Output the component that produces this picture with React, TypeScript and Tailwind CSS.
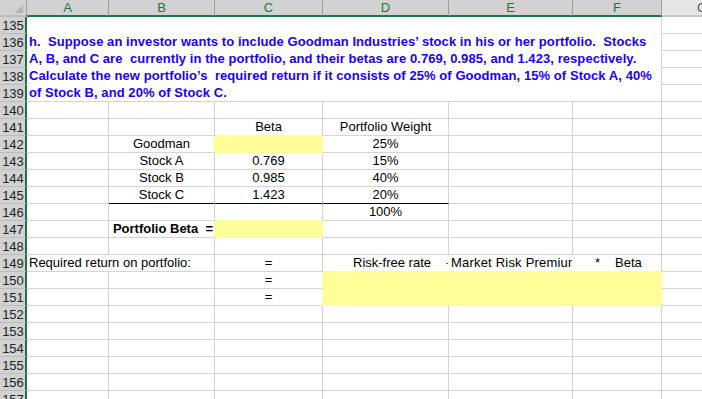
import React from "react";
import { twMerge } from "tailwind-merge";

const YELLOW = "bg-[#ffff99] border-r-[#ffff99] border-b-[#ffff99]";

function Cell({ className, children }: { className?: string; children?: React.ReactNode }) {
  return (
    <div
      className={twMerge(
        "flex items-center min-w-0 whitespace-nowrap border-r border-b border-r-[#d4d4d4] border-b-[#d4d4d4] text-[13px] leading-[16px] text-black",
        className
      )}
    >
      {children}
    </div>
  );
}

function RowHead({ n }: { n: number }) {
  return (
    <div className="flex items-center justify-center pl-[1px] bg-[#d2d2d2] border-r-2 border-r-[#217346] border-b border-b-[#bcbcbc] text-[13px] leading-none text-[#222]">
      {n}
    </div>
  );
}

function ColHead({ label }: { label: string }) {
  return (
    <div className="flex items-center justify-center bg-[#d2d2d2] border-r border-r-[#9e9e9e] border-b-2 border-b-[#217346] text-[13px] leading-none text-[#217346]">
      {label}
    </div>
  );
}

// G column, only a sliver of it is on screen
function GCell() {
  return <Cell />;
}

function Row({ n, children }: { n: number; children?: React.ReactNode }) {
  return (
    <>
      <RowHead n={n} />
      {children}
      <GCell />
    </>
  );
}

function Empty() {
  return <Cell />;
}

export default function App() {
  return (
    <div className="w-[702px] h-[399px] overflow-hidden bg-white font-['Liberation_Sans',Arial,sans-serif]">
      <div className="grid grid-cols-[27px_82px_106px_108px_126px_124px_89px_80px] auto-rows-[17px]">
        {/* column headers */}
        <div className="relative bg-[#d2d2d2] border-r border-r-[#9e9e9e] border-b-2 border-b-[#bcbcbc]">
          <svg className="absolute left-[15px] top-[5px]" width="9" height="8" viewBox="0 0 9 8">
            <polygon points="8,0 8,8 0,8" fill="#b4b4b4" />
          </svg>
        </div>
        {["A", "B", "C", "D", "E", "F"].map((l) => (
          <ColHead key={l} label={l} />
        ))}
        <div className="flex items-center justify-center bg-[#e6e6e6] border-b-2 border-b-[#c8c8c8] text-[13px] leading-none text-[#555]">
          G
        </div>

        {/* 135-139 question text, merged A:F */}
        <RowHead n={135} />
        <div className="col-span-6 row-span-5 flex flex-col border-r border-b border-r-[#d4d4d4] border-b-[#d4d4d4] pl-[2px] text-[13px] leading-[17px] font-bold tracking-[0.07px] text-[#1a00ff] whitespace-pre">
          <div className="h-[17px]" />
          <div>h.  Suppose an investor wants to include Goodman Industries’ stock in his or her portfolio.  Stocks</div>
          <div>A, B, and C are  currently in the portfolio, and their betas are 0.769, 0.985, and 1.423, respectively.</div>
          <div>Calculate the new portfolio’s  required return if it consists of 25% of Goodman, 15% of Stock A, 40%</div>
          <div>of Stock B, and 20% of Stock C.</div>
        </div>
        <GCell />
        <RowHead n={136} />
        <GCell />
        <RowHead n={137} />
        <GCell />
        <RowHead n={138} />
        <GCell />
        <RowHead n={139} />
        <GCell />

        <Row n={140}>
          <Empty /><Empty /><Empty /><Empty /><Empty /><Empty />
        </Row>
        <Row n={141}>
          <Empty />
          <Empty />
          <Cell className="justify-center border-b-[#ffff99]">Beta</Cell>
          <Cell className="justify-center">Portfolio Weight</Cell>
          <Empty />
          <Empty />
        </Row>
        <Row n={142}>
          <Empty />
          <Cell className="justify-center border-r-[#ffff99]">Goodman</Cell>
          <Cell className={YELLOW} />
          <Cell className="justify-center">25%</Cell>
          <Empty />
          <Empty />
        </Row>
        <Row n={143}>
          <Empty />
          <Cell className="justify-center">Stock A</Cell>
          <Cell className="justify-center">0.769</Cell>
          <Cell className="justify-center">15%</Cell>
          <Empty />
          <Empty />
        </Row>
        <Row n={144}>
          <Empty />
          <Cell className="justify-center">Stock B</Cell>
          <Cell className="justify-center">0.985</Cell>
          <Cell className="justify-center">40%</Cell>
          <Empty />
          <Empty />
        </Row>
        <Row n={145}>
          <Empty />
          <Cell className="justify-center border-b-black">Stock C</Cell>
          <Cell className="justify-center border-b-black">1.423</Cell>
          <Cell className="justify-center border-b-black">20%</Cell>
          <Empty />
          <Empty />
        </Row>
        <Row n={146}>
          <Empty />
          <Empty />
          <Cell className="border-b-[#ffff99]" />
          <Cell className="justify-center">100%</Cell>
          <Empty />
          <Empty />
        </Row>
        <Row n={147}>
          <Empty />
          <Cell className="justify-end pr-[1px] font-bold border-r-[#ffff99] whitespace-pre">Portfolio Beta  =</Cell>
          <Cell className={YELLOW} />
          <Empty />
          <Empty />
          <Empty />
        </Row>
        <Row n={148}>
          <Empty /><Empty /><Empty /><Empty /><Empty /><Empty />
        </Row>
        <Row n={149}>
          <Cell className="pl-[2px] border-r-transparent">Required return on portfolio:</Cell>
          <Empty />
          <Cell className="justify-center">=</Cell>
          <Cell className="pl-[30px] border-r-transparent border-b-[#ffff99]">
            <span>Risk-free rate</span>
            <span className="ml-auto w-[2px] h-px bg-[#666]" />
          </Cell>
          <Cell className="pl-[2px] overflow-hidden border-r-transparent border-b-[#ffff99] tracking-[0.2px]">Market Risk Premium</Cell>
          <Cell className="pl-[22px] border-b-[#ffff99]">
            <span>*</span>
            <span className="ml-[15px]">Beta</span>
          </Cell>
        </Row>
        <RowHead n={150} />
        <Empty />
        <Empty />
        <Cell className="justify-center border-r-[#ffff99]">=</Cell>
        <Cell className={twMerge("col-span-3 row-span-2", YELLOW)} />
        <GCell />
        <RowHead n={151} />
        <Empty />
        <Empty />
        <Cell className="justify-center border-r-[#ffff99]">=</Cell>
        <GCell />

        {[152, 153, 154, 155, 156, 157].map((n) => (
          <Row key={n} n={n}>
            <Empty /><Empty /><Empty /><Empty /><Empty /><Empty />
          </Row>
        ))}
      </div>
    </div>
  );
}
